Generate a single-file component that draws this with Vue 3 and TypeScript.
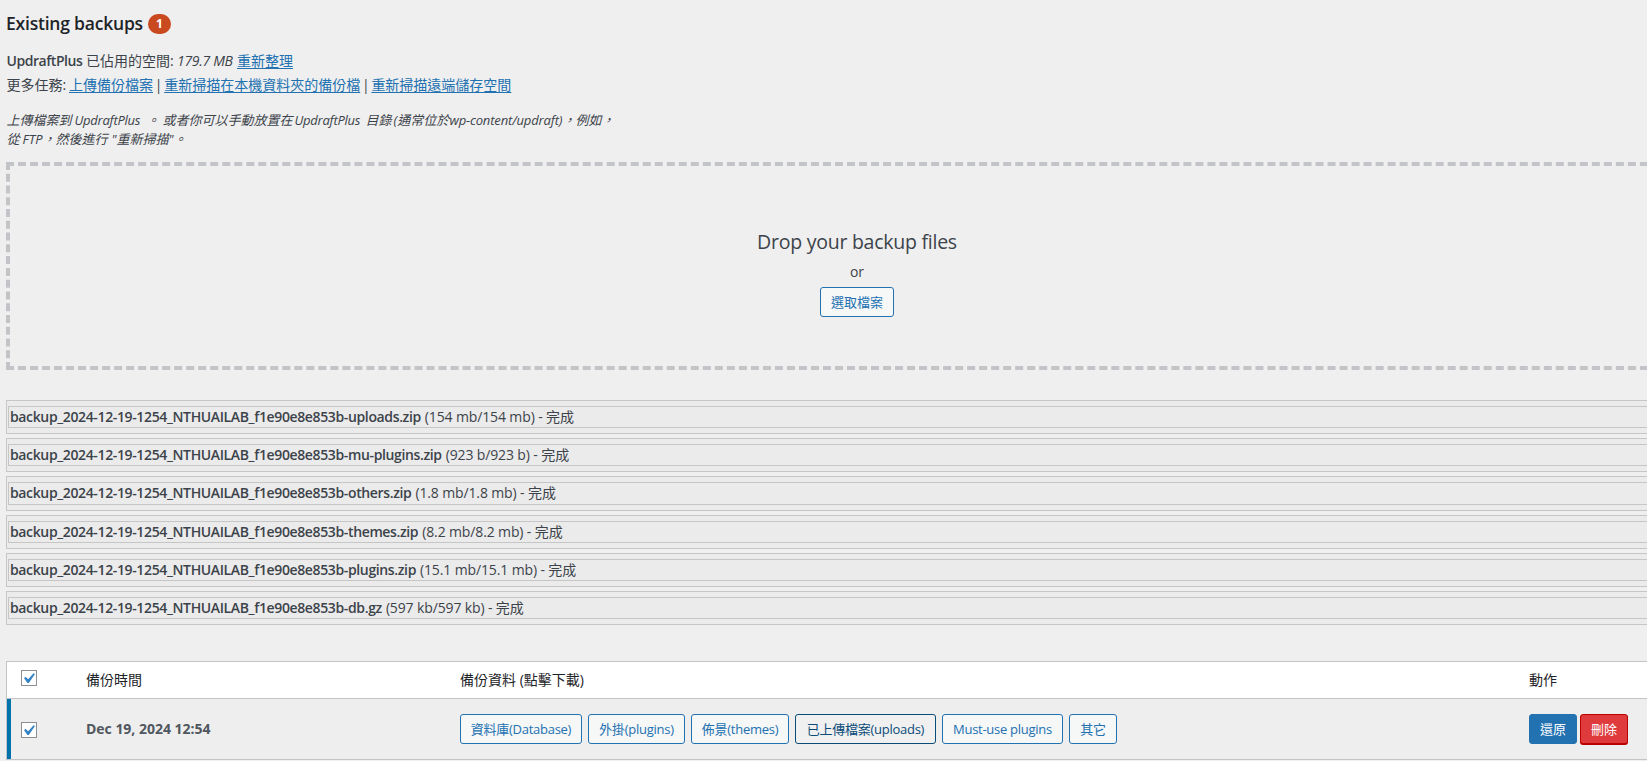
<script setup lang="ts">
import { ref } from 'vue'

interface BackupFile {
  name: string
  size: string
}

interface Entity {
  id: string
  label: string
  active?: boolean
}

const files: BackupFile[] = [
  { name: 'uploads.zip', size: '154 mb/154 mb' },
  { name: 'mu-plugins.zip', size: '923 b/923 b' },
  { name: 'others.zip', size: '1.8 mb/1.8 mb' },
  { name: 'themes.zip', size: '8.2 mb/8.2 mb' },
  { name: 'plugins.zip', size: '15.1 mb/15.1 mb' },
  { name: 'db.gz', size: '597 kb/597 kb' },
]
const prefix = 'backup_2024-12-19-1254_NTHUAILAB_f1e90e8e853b-'

const entities: Entity[] = [
  { id: 'db', label: '資料庫(Database)' },
  { id: 'plugins', label: '外掛(plugins)' },
  { id: 'themes', label: '佈景(themes)' },
  { id: 'uploads', label: '已上傳檔案(uploads)', active: true },
  { id: 'mu', label: 'Must-use plugins' },
  { id: 'others', label: '其它' },
]

const allChecked = ref(true)
const rowChecked = ref(true)
</script>

<template>
  <main class="page">
    <h2 class="title">
      <span class="title-text">Existing backups</span><span class="badge">1</span>
    </h2>

    <div class="info">
      <b class="product">UpdraftPlus</b><span class="used">已佔用的空間:</span><em class="amount">179.7 MB</em><a>重新整理</a>
    </div>
    <div class="info tasks">
      <span class="more">更多任務:</span><a>上傳備份檔案</a><i class="bar">|</i><a>重新掃描在本機資料夾的備份檔</a><i class="bar">|</i><a>重新掃描遠端儲存空間</a>
    </div>

    <p class="hint">
      <span class="hint-line"><span>上傳檔案到</span><span class="w1">UpdraftPlus</span><span class="w2">。</span><span class="w3">或者你可以手動放置在</span><span class="w4">UpdraftPlus</span><span class="w5">目錄</span><span class="w6">(通常位於</span><span class="w7">wp-content/updraft)</span><span>，例如，</span></span>
      <span class="hint-line"><span class="w8">從</span><span class="w9">FTP</span><span>，然後進行</span><span class="w10">"重新掃描"。</span></span>
    </p>

    <section class="dropzone">
      <p class="drop-title">Drop your backup files</p>
      <p class="or">or</p>
      <button class="btn select">選取檔案</button>
    </section>

    <section class="files">
      <div v-for="f in files" :key="f.name" class="file">
        <div class="file-inner">
          <b class="file-name">{{ prefix }}{{ f.name }}</b><span class="file-size">({{ f.size }}) - <span class="done">完成</span></span>
        </div>
      </div>
    </section>

    <section class="table">
      <div class="row head">
        <div class="cell check" @click="allChecked = !allChecked">
          <span class="box"><svg v-if="allChecked" viewBox="0 0 20 20"><path d="M14.83 4.89l1.34.94-5.81 8.38H9.02L5.78 9.67l1.34-1.25 2.57 2.4z" /></svg></span>
        </div>
        <div class="cell label">備份時間</div>
        <div class="cell label">備份資料 (點擊下載)</div>
        <div class="cell label">動作</div>
      </div>
      <div class="row body">
        <div class="cell check" @click="rowChecked = !rowChecked">
          <span class="box"><svg v-if="rowChecked" viewBox="0 0 20 20"><path d="M14.83 4.89l1.34.94-5.81 8.38H9.02L5.78 9.67l1.34-1.25 2.57 2.4z" /></svg></span>
        </div>
        <div class="cell label"><b class="stamp">Dec 19, 2024 12:54</b></div>
        <div class="cell buttons">
          <button v-for="e in entities" :key="e.id" class="btn" :class="[e.id, { active: e.active }]">{{ e.label }}</button>
        </div>
        <div class="cell actions">
          <button class="btn primary">還原</button>
          <button class="btn danger">刪除</button>
        </div>
      </div>
    </section>
  </main>
</template>

<style>
body {
  background: #efefef;
  overflow: hidden;
}
</style>

<style scoped>
* {
  box-sizing: border-box;
}
.page {
  width: 1702px;
  height: 761px;
  margin-left: 6px;
  overflow: hidden;
  display: flex;
  flex-direction: column;
  background: #efefef;
  color: #3c434a;
  font-family: 'Open Sans', 'Noto Sans CJK TC', sans-serif;
  font-size: 13px;
  white-space: nowrap;
}
h2,
p {
  margin: 0;
}
.title {
  height: 49px;
  padding: 11px 0 0 0;
  display: flex;
  align-items: flex-start;
  font-size: 17.5px;
  line-height: 24px;
  font-weight: 600;
  color: #1d2327;
}
.title-text {
  width: 142px;
  letter-spacing: -0.21px;
}
.badge {
  width: 23px;
  height: 20px;
  margin-top: 3px;
  border-radius: 10px;
  background: #ca4a1f;
  color: #fff;
  font-size: 12px;
  line-height: 20px;
  font-weight: 700;
  text-align: center;
}
.info {
  height: 24px;
  padding-left: 0.5px;
  display: flex;
  align-items: center;
  font-size: 14px;
  line-height: 24px;
}
.product {
  width: 79.5px;
  font-weight: 600;
  letter-spacing: -0.45px;
}
.used {
  width: 91px;
}
.amount {
  width: 60px;
  letter-spacing: -0.3px;
}
.more {
  width: 62.5px;
}
.bar {
  width: 11.2px;
  font-style: normal;
  text-align: center;
}
a {
  color: #2271b1;
  text-decoration: underline;
  text-underline-offset: 2px;
  cursor: pointer;
}
.hint {
  height: 65px;
  padding: 14px 0 0 0.5px;
  font-size: 13px;
  line-height: 19px;
  font-style: italic;
}
.hint-line {
  display: flex;
}
.w1 { padding-left: 3px; width: 71px; letter-spacing: -0.25px; }
.w2 { padding-left: 4px; width: 20px; }
.w3 { width: 132px; }
.w4 { width: 71px; letter-spacing: -0.25px; }
.w5 { width: 28px; }
.w6 { width: 56px; }
.w7 { width: 113px; letter-spacing: -0.15px; }
.w8 { width: 16px; }
.w9 { width: 20px; }
.w10 { padding-left: 4px; }
.dropzone {
  height: 208px;
  border: 4px dashed #c3c4c7;
  display: flex;
  flex-direction: column;
  align-items: center;
}
.drop-title {
  margin-top: 62px;
  font-size: 19.5px;
  line-height: 28px;
  letter-spacing: -0.25px;
}
.or {
  margin-top: 6px;
  font-size: 14px;
  line-height: 20px;
}
.btn {
  height: 30px;
  padding: 0;
  border: 1px solid #2271b1;
  border-radius: 3px;
  background: #f6f7f7;
  color: #2271b1;
  font-family: inherit;
  font-size: 13px;
  line-height: 28px;
  white-space: nowrap;
  cursor: pointer;
}
.select {
  width: 74px;
  margin-top: 5px;
}
.files {
  padding-top: 30px;
  height: 291px;
}
.file {
  height: 34.2px;
  margin-bottom: 4px;
  padding: 5px 1px;
  border: 1px solid #c6c6c6;
  background: #ebebeb;
}
.file-inner {
  height: 22.2px;
  padding-left: 1px;
  border: 1px solid #c6c6c6;
  display: flex;
  align-items: center;
  font-size: 14px;
  line-height: 20px;
}
.file-name {
  margin-right: 4px;
  font-weight: 600;
  letter-spacing: -0.365px;
}
.file-size {
  letter-spacing: -0.13px;
}
.done {
  letter-spacing: 0;
}
.table {
  height: 99px;
  border: 1px solid #c3c4c7;
}
.row {
  display: grid;
  grid-template-columns: 79px 374px 1069px 1fr;
  align-items: center;
}
.head {
  height: 37px;
  background: #fff;
  border-bottom: 1px solid #c3c4c7;
  color: #1d2327;
  font-size: 14px;
}
.body {
  height: 60px;
  background: #eee;
  box-shadow: inset 4px 0 #0073aa;
}
.label {
  padding-bottom: 2px;
}
.check {
  padding-left: 14px;
}
.head .check {
  margin-top: -4px;
}
.body .check {
  margin-top: 2px;
}
.box {
  display: block;
  width: 16px;
  height: 16px;
  border: 1px solid #8c8f94;
  background: #fff;
}
.box svg {
  display: block;
  width: 21px;
  height: 21px;
  margin: -3px 0 0 -4px;
  fill: #3582c4;
}
.stamp {
  font-size: 14px;
  font-weight: 700;
  color: #50575e;
  letter-spacing: -0.02px;
}
.buttons {
  display: flex;
  gap: 6px;
}
.buttons .btn {
  letter-spacing: -0.27px;
}
.db { width: 122px; }
.plugins { width: 97px; }
.themes { width: 98px; }
.uploads { width: 141px; }
.mu { width: 121px; }
.others { width: 48px; }
.active {
  background: #f0f0f1;
  border-color: #0a4b78;
  color: #0a4b78;
}
.actions {
  display: flex;
  gap: 3px;
}
.primary {
  width: 48px;
  background: #2271b1;
  color: #fff;
}
.danger {
  width: 48px;
  background: #df3b3d;
  border-color: #ba0000;
  color: #fff;
  box-shadow: 0 1px #ba0000;
}
</style>
